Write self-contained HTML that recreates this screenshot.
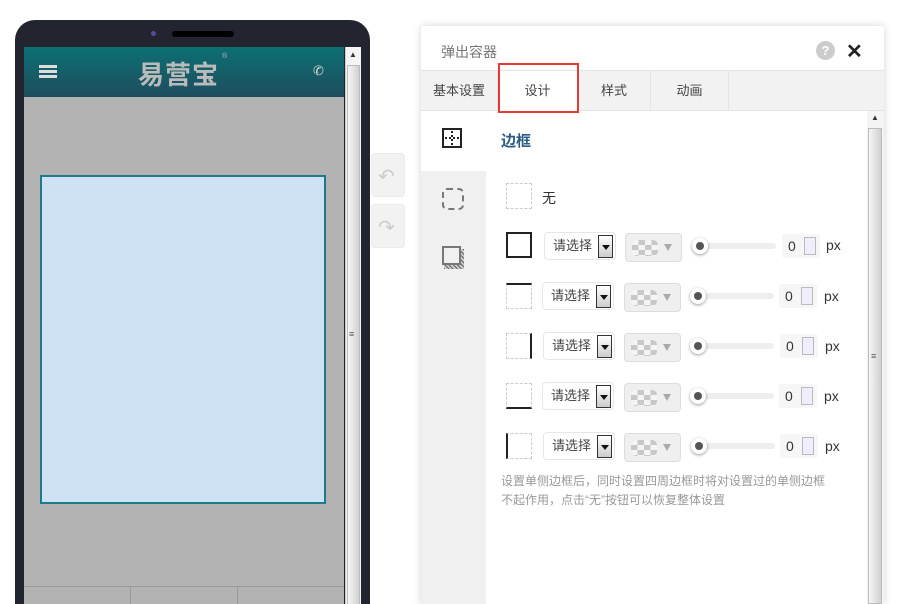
<!DOCTYPE html>
<html><head><meta charset="utf-8"><style>
*{margin:0;padding:0;box-sizing:border-box}
html,body{width:903px;height:604px;overflow:hidden}
body{background:#fff;font-family:"Liberation Sans","Noto Sans CJK SC",sans-serif;position:relative}
.a{position:absolute}
.phone{left:15px;top:20px;width:355px;height:584px;background:#22242f;border-radius:20px 20px 0 0}
.hdr{left:24px;top:47px;width:320px;height:50px;background:linear-gradient(#0c7073,#1e4d5e)}
.scr{left:24px;top:97px;width:320px;height:507px;background:#b3b3b3}
.sb{left:345px;top:47px;width:16px;height:557px;background:#f4f4f4;border-left:1px solid #ccc}
.btn{width:34px;height:44px;background:#f2f2f2;border-radius:4px;border:1px solid #ebebeb}
.panel{left:421px;top:26px;width:463px;height:578px;background:#fff;box-shadow:0 0 8px rgba(0,0,0,.18);border-radius:3px 3px 0 0}
.tab{top:71px;height:39px;line-height:39px;font-size:13px;color:#444;text-align:center;border-right:1px solid #e4e4e4}
.sel{width:72px;height:28px;border:1px solid #e6e6e6;border-radius:4px;background:#fff;font-size:13px;color:#444;padding-left:8px;line-height:26px}
.sel i{position:absolute;right:2px;top:2px;width:15px;height:23px;border:1px solid #333;background:linear-gradient(#fff,#ccc)}
.sel i:after{content:"";position:absolute;left:3px;top:9px;border:4px solid transparent;border-top:5px solid #111}
.col{width:57px;height:29px;background:#efefef;border:1px solid #ddd;border-radius:4px}
.chk{left:6px;top:6px;width:26px;height:16px;border-radius:5px;background:repeating-conic-gradient(#c8c8c8 0 25%,#f4f4f4 0 50%) 0 0/13px 10px}
.col b{position:absolute;left:38px;top:10px;border:4px solid transparent;border-top:7px solid #aaa}
.trk{width:76px;height:6px;background:#eee;border-radius:3px}
.knob{width:16px;height:16px;border-radius:50%;background:#fff;box-shadow:0 1px 3px rgba(0,0,0,.4)}
.knob:after{content:"";position:absolute;left:4px;top:4px;width:8px;height:8px;border-radius:50%;background:#555}
.num{width:38px;height:24px;background:#f6f6f6;border-radius:3px;font-size:14px;color:#333;line-height:24px;padding-left:6px}
.num i{position:absolute;left:22px;top:3px;width:12px;height:18px;border:1px solid #bbb;background:#eef}
.px{font-size:14px;color:#333}
.ic{width:26px;height:26px;border:1px dashed #ccc}
</style></head><body>
<div class="a phone"></div>
<div class="a" style="left:151px;top:31px;width:5px;height:5px;border-radius:50%;background:#5a4a9a"></div>
<div class="a" style="left:172px;top:31px;width:62px;height:6px;border-radius:3px;background:#000"></div>
<div class="a hdr"></div>
<div class="a" style="left:39px;top:65px;width:18px;height:3px;background:#ddd;box-shadow:0 5px 0 #ddd,0 10px 0 #ddd"></div>
<div class="a" style="left:138px;top:55px;font-size:26px;font-weight:bold;color:#bbb;letter-spacing:1px">易营宝</div>
<div class="a" style="left:222px;top:53px;font-size:7px;color:#bbb">®</div>
<div class="a" style="left:313px;top:63px;font-size:13px;color:#ddd">✆</div>
<div class="a scr"></div>
<div class="a" style="left:40px;top:175px;width:286px;height:329px;background:#cfe2f3;border:2px solid #1b7b8a"></div>
<div class="a" style="left:24px;top:586px;width:320px;height:1px;background:#999"></div>
<div class="a" style="left:130px;top:586px;width:1px;height:20px;background:#999"></div>
<div class="a" style="left:237px;top:586px;width:1px;height:20px;background:#999"></div>
<div class="a sb"><div class="a" style="left:1px;top:18px;width:13px;height:540px;background:linear-gradient(90deg,#f6f6f6,#d0d0d0);border:1px solid #bbb"></div><div class="a" style="left:3px;top:3px;font-size:8px;color:#333">▲</div><div class="a" style="left:3px;top:282px;font-size:9px;color:#555">≡</div></div>
<div class="a btn" style="left:371px;top:153px"><span class="a" style="left:6px;top:10px;font-size:20px;color:#ccc">↶</span></div>
<div class="a btn" style="left:371px;top:204px"><span class="a" style="left:6px;top:10px;font-size:20px;color:#ccc">↷</span></div>

<div class="a panel"></div>
<div class="a" style="left:441px;top:42px;font-size:14px;color:#777">弹出容器</div>
<div class="a" style="left:816px;top:41px;width:19px;height:19px;border-radius:50%;background:#ccc;color:#fff;font-size:13px;font-weight:bold;text-align:center;line-height:19px">?</div>
<div class="a" style="left:846px;top:39px;font-size:20px;font-weight:bold;color:#222">✕</div>
<div class="a" style="left:421px;top:70px;width:463px;height:41px;background:#f2f2f2;border-top:1px solid #e4e4e4;border-bottom:1px solid #e4e4e4"></div>
<div class="a tab" style="left:421px;width:77px">基本设置</div>
<div class="a tab" style="left:498px;width:80px;background:#fff;height:40px">设计</div>
<div class="a tab" style="left:578px;width:73px">样式</div>
<div class="a tab" style="left:651px;width:78px">动画</div>
<div class="a" style="left:498px;top:63px;width:81px;height:50px;border:2px solid #e53935"></div>
<div class="a" style="left:421px;top:171px;width:65px;height:433px;background:#f0f0f0"></div>
<div class="a" style="left:442px;top:128px;width:20px;height:20px;border:2px solid #222"><div class="a" style="left:7px;top:1px;height:14px;border-left:2px dotted #222"></div><div class="a" style="left:1px;top:7px;width:14px;border-top:2px dotted #222"></div></div>
<div class="a" style="left:442px;top:188px;width:22px;height:22px;border:2px dashed #777;border-radius:5px"></div>
<div class="a" style="left:444px;top:249px;width:20px;height:20px;background:repeating-linear-gradient(45deg,#666 0 1px,#ccc 1px 3px)"></div>
<div class="a" style="left:442px;top:246px;width:19px;height:19px;border:2px solid #777;background:#f0f0f0"></div>
<div class="a" style="left:867px;top:111px;width:17px;height:493px;background:#f4f4f4"><div class="a" style="left:1px;top:17px;width:14px;height:476px;background:linear-gradient(90deg,#f6f6f6,#d0d0d0);border:1px solid #bbb"></div><div class="a" style="left:4px;top:2px;font-size:8px;color:#333">▲</div><div class="a" style="left:4px;top:240px;font-size:9px;color:#555">≡</div></div>
<div class="a" style="left:501px;top:130px;font-size:15px;font-weight:bold;color:#2a5d84">边框</div>
<div class="a ic" style="left:506px;top:183px"></div>
<div class="a" style="left:542px;top:188px;font-size:14px;color:#333">无</div>

<div class="a ic" style="left:506px;top:232px;border:2px solid #222"></div>
<div class="a ic" style="left:506px;top:283px;border-top:2px solid #222"></div>
<div class="a ic" style="left:506px;top:333px;border-right:2px solid #222"></div>
<div class="a ic" style="left:506px;top:383px;border-bottom:2px solid #222"></div>
<div class="a ic" style="left:506px;top:433px;border-left:2px solid #222"></div>

<div class="a sel" style="left:544px;top:232px">请选择<i></i></div>
<div class="a sel" style="left:542px;top:282px">请选择<i></i></div>
<div class="a sel" style="left:543px;top:332px">请选择<i></i></div>
<div class="a sel" style="left:542px;top:382px">请选择<i></i></div>
<div class="a sel" style="left:543px;top:432px">请选择<i></i></div>

<div class="a col" style="left:625px;top:233px"><span class="a chk"></span><b></b></div>
<div class="a col" style="left:624px;top:283px"><span class="a chk"></span><b></b></div>
<div class="a col" style="left:624px;top:333px"><span class="a chk"></span><b></b></div>
<div class="a col" style="left:624px;top:383px"><span class="a chk"></span><b></b></div>
<div class="a col" style="left:624px;top:433px"><span class="a chk"></span><b></b></div>

<div class="a trk" style="left:700px;top:243px"></div><div class="a knob" style="left:692px;top:238px"></div>
<div class="a trk" style="left:698px;top:293px"></div><div class="a knob" style="left:690px;top:288px"></div>
<div class="a trk" style="left:698px;top:343px"></div><div class="a knob" style="left:690px;top:338px"></div>
<div class="a trk" style="left:698px;top:393px"></div><div class="a knob" style="left:690px;top:388px"></div>
<div class="a trk" style="left:699px;top:443px"></div><div class="a knob" style="left:691px;top:438px"></div>

<div class="a num" style="left:782px;top:234px">0<i></i></div><div class="a px" style="left:826px;top:237px">px</div>
<div class="a num" style="left:779px;top:284px">0<i></i></div><div class="a px" style="left:824px;top:288px">px</div>
<div class="a num" style="left:780px;top:334px">0<i></i></div><div class="a px" style="left:825px;top:338px">px</div>
<div class="a num" style="left:779px;top:384px">0<i></i></div><div class="a px" style="left:824px;top:388px">px</div>
<div class="a num" style="left:780px;top:434px">0<i></i></div><div class="a px" style="left:825px;top:438px">px</div>

<div class="a" style="left:501px;top:472px;font-size:12px;line-height:19px;color:#999;white-space:nowrap">设置单侧边框后，同时设置四周边框时将对设置过的单侧边框<br>不起作用，点击“无”按钮可以恢复整体设置</div>
</body></html>
